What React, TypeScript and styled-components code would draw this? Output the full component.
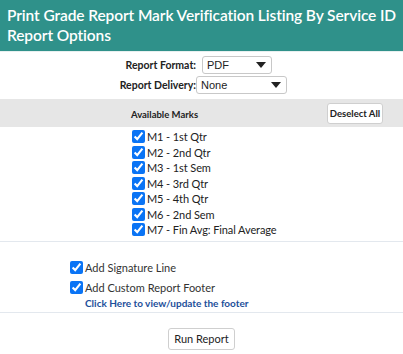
import React from "react";
import styled, { createGlobalStyle } from "styled-components";

const Global = createGlobalStyle`
  html, body { margin: 0; padding: 0; background: #fff; }
  body { font-family: Lato, "Open Sans", sans-serif; color: #222; }
`;

const Page = styled.div`
  width: 403px;
  display: flex;
  flex-direction: column;
`;

const Header = styled.div`
  background: #2f918a;
  color: #fff;
  font-size: 15.5px;
  font-weight: 600;
  letter-spacing: -0.1px;
  line-height: 20px;
  padding: 5px 7px 6px 7px;
  height: 40px;
  white-space: nowrap;
  border-bottom: 1px solid #e8f0f0;
`;

const FormatSection = styled.div`
  display: grid;
  grid-template-columns: 199px auto;
  row-gap: 2px;
  padding: 4px 0 4px 0;
  align-items: center;
`;

const Label = styled.label`
  font-size: 10.5px;
  font-weight: 700;
  text-align: right;
  padding-right: 3px;
  color: #222;
`;

const SelectBox = styled.div<{ $w: number; $shift?: number }>`
  width: ${(p) => p.$w}px;
  height: 18px;
  box-sizing: border-box;
  border: 1px solid #c8c8c8;
  border-radius: 3px;
  display: flex;
  align-items: center;
  justify-content: space-between;
  padding: 0 5px 0 4px;
  font-size: 11px;
  font-family: "Liberation Sans", Arial, sans-serif;
  margin-left: ${(p) => p.$shift ?? 0}px;
  background: #fff;
`;

const Arrow = styled.span`
  width: 0;
  height: 0;
  border-left: 5px solid transparent;
  border-right: 5px solid transparent;
  border-top: 6px solid #222;
`;

const MarksBar = styled.div`
  background: #e6e6e6;
  height: 28px;
  display: grid;
  grid-template-columns: 1fr auto;
  align-items: center;
  padding-right: 20px;
  margin-top: 1px;
`;

const MarksTitle = styled.div`
  font-size: 9.5px;
  font-weight: 700;
  text-align: center;
  padding-left: 2px;
  padding-top: 3px;
`;

const SmallButton = styled.button`
  font-family: Lato, sans-serif;
  font-size: 9.5px;
  font-weight: 700;
  background: #fff;
  border: 1px solid #cfcfcf;
  border-radius: 3px;
  height: 21px;
  width: 56px;
  padding: 0;
  color: #222;
`;

const MarkList = styled.div`
  display: flex;
  flex-direction: column;
  padding: 2px 0 3px 132px;
  border-bottom: 1px solid #e3e8ee;
`;

const CheckRow = styled.label`
  display: flex;
  align-items: center;
  height: 15.5px;
  font-size: 11px;
  letter-spacing: -0.1px;
  color: #222;
`;

const Check = styled.input.attrs({ type: "checkbox" })`
  width: 13px;
  height: 13px;
  margin: 0 2px 0 0;
  accent-color: #0a74f5;
`;

const OptionsSection = styled.div`
  display: flex;
  flex-direction: column;
  padding: 16px 0 0 70px;
  border-bottom: 1px solid #e3e8ee;
  height: 54px;
`;

const OptionRow = styled.label`
  display: flex;
  align-items: center;
  height: 20px;
  font-size: 11px;
  color: #333;
`;

const Link = styled.a`
  font-size: 10px;
  font-weight: 700;
  color: #1d4f9a;
  text-decoration: none;
  padding-left: 15px;
  line-height: 14px;
  margin-top: -2px;
`;

const Footer = styled.div`
  display: flex;
  justify-content: center;
  padding: 15px 0 0 0;
`;

const RunButton = styled.button`
  font-family: Lato, sans-serif;
  font-size: 11px;
  background: #fff;
  border: 1px solid #cfcfcf;
  border-radius: 3px;
  height: 22px;
  padding: 0 5px;
  color: #222;
`;

const marks = [
  "M1 - 1st Qtr",
  "M2 - 2nd Qtr",
  "M3 - 1st Sem",
  "M4 - 3rd Qtr",
  "M5 - 4th Qtr",
  "M6 - 2nd Sem",
  "M7 - Fin Avg: Final Average",
];

export default function App() {
  return (
    <Page>
      <Global />
      <Header>
        Print Grade Report Mark Verification Listing By Service ID
        <br />
        Report Options
      </Header>
      <FormatSection>
        <Label>Report Format:</Label>
        <SelectBox $w={70} $shift={3}>
          PDF <Arrow />
        </SelectBox>
        <Label>Report Delivery:</Label>
        <SelectBox $w={91} $shift={-3}>
          None <Arrow />
        </SelectBox>
      </FormatSection>
      <MarksBar>
        <MarksTitle>Available Marks</MarksTitle>
        <SmallButton>Deselect All</SmallButton>
      </MarksBar>
      <MarkList>
        {marks.map((m) => (
          <CheckRow key={m}>
            <Check defaultChecked />
            {m}
          </CheckRow>
        ))}
      </MarkList>
      <OptionsSection>
        <OptionRow>
          <Check defaultChecked />
          Add Signature Line
        </OptionRow>
        <OptionRow>
          <Check defaultChecked />
          Add Custom Report Footer
        </OptionRow>
        <Link href="#">Click Here to view/update the footer</Link>
      </OptionsSection>
      <Footer>
        <RunButton>Run Report</RunButton>
      </Footer>
    </Page>
  );
}
